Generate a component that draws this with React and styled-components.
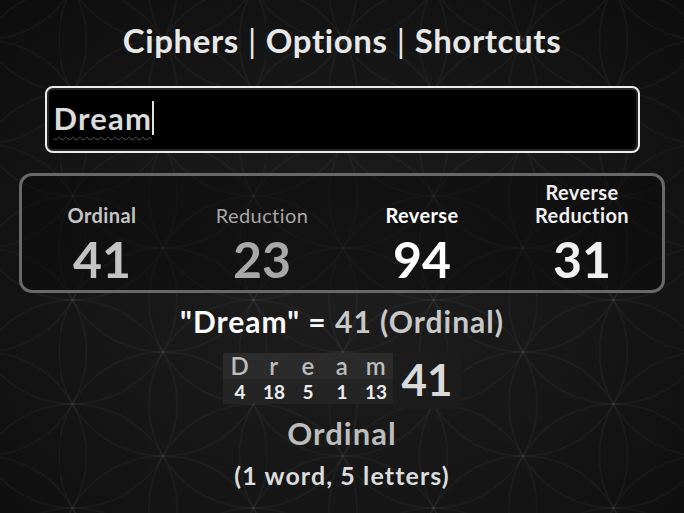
import React from "react";
import styled, { createGlobalStyle } from "styled-components";

// flower-of-life tile: hex lattice, circle radius = lattice spacing
const R = 104;
const DX = (R * Math.sqrt(3)) / 2;
const TILE_W = DX * 2;
const TILE_H = R;

const buildTile = () => {
  let circles = "";
  for (let i = -2; i <= 4; i++) {
    for (let j = -2; j <= 3; j++) {
      const cx = i * DX;
      const cy = j * R + (Math.abs(i) % 2 === 1 ? R / 2 : 0);
      circles += `<circle cx='${cx.toFixed(2)}' cy='${cy.toFixed(2)}' r='${R}'/>`;
    }
  }
  const svg = `<svg xmlns='http://www.w3.org/2000/svg' width='${TILE_W.toFixed(2)}' height='${TILE_H}' viewBox='0 0 ${TILE_W.toFixed(2)} ${TILE_H}'><g fill='none' stroke='rgb(255,255,255)' stroke-opacity='0.035' stroke-width='1.5'>${circles}</g></svg>`;
  return `url("data:image/svg+xml,${encodeURIComponent(svg)}")`;
};

const GlobalStyle = createGlobalStyle`
  html, body {
    margin: 0;
    padding: 0;
    background: #141414;
  }
  body {
    font-family: Lato, "Liberation Sans", sans-serif;
    color: #e6e6e6;
  }
`;

const Page = styled.div`
  width: 684px;
  height: 513px;
  overflow: hidden;
  box-sizing: border-box;
  display: flex;
  flex-direction: column;
  align-items: center;
  padding-top: 20px;
  background-image: ${buildTile()},
    radial-gradient(ellipse at 50% 55%, #1e1e1e 0%, #161616 55%, #0d0d0d 100%);
  background-size: ${TILE_W.toFixed(2)}px ${TILE_H}px, 100% 100%;
  background-position: 163px 40px, 0 0;
  background-repeat: repeat, no-repeat;
`;

const Nav = styled.div`
  font-size: 33px;
  font-weight: 700;
  line-height: 40px;
  letter-spacing: 0.6px;
  color: #e8e8e8;
  white-space: pre;
  a {
    color: inherit;
    text-decoration: none;
  }
`;

const Sep = styled.span`
  font-weight: 400;
`;

const InputBox = styled.div`
  margin-top: 26px;
  width: 595px;
  height: 67px;
  box-sizing: border-box;
  border: 2px solid #ececec;
  border-radius: 8px;
  background: #000;
  box-shadow: inset 0 0 0 2px #262626;
  display: flex;
  align-items: center;
  padding-left: 7px;
  padding-bottom: 3px;
`;

const Typed = styled.span`
  font-size: 31px;
  font-weight: 700;
  letter-spacing: 1.2px;
  color: #dcdcdc;
  text-decoration: underline wavy #555;
  text-decoration-thickness: 1px;
  text-underline-offset: 6px;
`;

const Caret = styled.span`
  display: inline-block;
  width: 2px;
  height: 34px;
  background: #e0e0e0;
`;

const Panel = styled.div`
  margin-top: 20px;
  width: 646px;
  height: 120px;
  box-sizing: border-box;
  border: 3px solid #686868;
  border-radius: 13px;
  background: rgba(8, 8, 8, 0.45);
  display: grid;
  grid-template-columns: repeat(4, 1fr);
`;

const Cell = styled.div`
  display: flex;
  flex-direction: column;
  align-items: center;
  justify-content: flex-end;
  padding-bottom: 3px;
  color: ${(p) => p.$color};
`;

const Label = styled.div`
  font-size: 20px;
  font-weight: ${(p) => (p.$bold ? 700 : 400)};
  line-height: 23px;
  letter-spacing: 0.4px;
  text-align: center;
`;

const Value = styled.div`
  margin-top: 4px;
  font-size: 50px;
  font-weight: 700;
  line-height: 56px;
`;

const Equation = styled.div`
  margin-top: 9px;
  font-size: 30px;
  font-weight: 700;
  line-height: 38px;
  letter-spacing: 1px;
  color: #fafafa;
`;

const Muted = styled.span`
  color: #c8c8c8;
`;

const Breakdown = styled.div`
  margin-top: 13px;
  display: flex;
`;

const Letters = styled.div`
  display: grid;
  grid-template-columns: repeat(${(p) => p.$n}, 34px);
  grid-template-rows: 26px 25px;
`;

const Char = styled.div`
  background: #2b2b2b;
  color: #bdbdbd;
  font-size: 24px;
  font-weight: 600;
  line-height: 26px;
  letter-spacing: 0.5px;
  text-align: center;
`;

const Num = styled.div`
  background: #242424;
  color: #ededed;
  font-size: 19px;
  font-weight: 700;
  line-height: 25px;
  text-align: center;
`;

const Total = styled.div`
  width: 68px;
  background: #1c1c1c;
  color: #dadada;
  font-size: 44px;
  font-weight: 700;
  display: flex;
  align-items: center;
  justify-content: center;
  padding-bottom: 4px;
  box-sizing: border-box;
`;

const CipherName = styled.div`
  margin-top: 5px;
  font-size: 31px;
  font-weight: 700;
  line-height: 38px;
  letter-spacing: 1px;
  color: #bdbdbd;
`;

const Count = styled.div`
  margin-top: 8px;
  font-size: 25px;
  font-weight: 700;
  line-height: 30px;
  letter-spacing: 1.1px;
  color: #dcdcdc;
`;

const ciphers = [
  { label: "Ordinal", value: 41, color: "#c4c4c4", bold: true },
  { label: "Reduction", value: 23, color: "#a8a8a8", bold: false },
  { label: "Reverse", value: 94, color: "#ffffff", bold: true },
  { label: ["Reverse", "Reduction"], value: 31, color: "#efefef", bold: true },
];

const word = "Dream";
const ordinal = (c) => c.toLowerCase().charCodeAt(0) - 96;

export default function App() {
  const letters = word.split("");
  const total = letters.reduce((s, c) => s + ordinal(c), 0);

  return (
    <Page>
      <GlobalStyle />
      <Nav>
        <a href="#ciphers">Ciphers</a>
        <Sep> | </Sep>
        <a href="#options">Options</a>
        <Sep> | </Sep>
        <a href="#shortcuts">Shortcuts</a>
      </Nav>

      <InputBox>
        <Typed>{word}</Typed>
        <Caret />
      </InputBox>

      <Panel>
        {ciphers.map((c, i) => (
          <Cell key={i} $color={c.color}>
            <Label $bold={c.bold}>
              {Array.isArray(c.label)
                ? c.label.map((l) => <div key={l}>{l}</div>)
                : c.label}
            </Label>
            <Value>{c.value}</Value>
          </Cell>
        ))}
      </Panel>

      <Equation>
        "{word}" = <Muted>{total} (Ordinal)</Muted>
      </Equation>

      <Breakdown>
        <Letters $n={letters.length}>
          {letters.map((c, i) => (
            <Char key={"c" + i}>{c}</Char>
          ))}
          {letters.map((c, i) => (
            <Num key={"n" + i}>{ordinal(c)}</Num>
          ))}
        </Letters>
        <Total>{total}</Total>
      </Breakdown>

      <CipherName>Ordinal</CipherName>
      <Count>(1 word, 5 letters)</Count>
    </Page>
  );
}
